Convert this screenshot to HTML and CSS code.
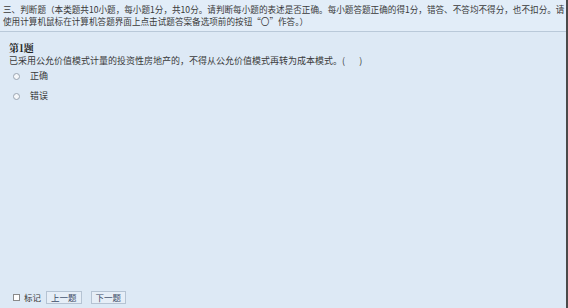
FILE: index.html
```html
<!DOCTYPE html>
<html lang="zh">
<head>
<meta charset="utf-8">
<link rel="stylesheet" href="styles.css">
</head>
<body>
<div class="frame">
  <div class="main">
    <div class="intro">
      <p>三、判断题（本类题共10小题，每小题1分，共10分。请判断每小题的表述是否正确。每小题答题正确的得1分，错答、不答均不得分，也不扣分。请使用计算机鼠标在计算机答题界面上点击试题答案备选项前的按钮“〇”作答。）</p>
    </div>
    <div class="question">
      <div class="qtitle">第1题</div>
      <div class="qtext">已采用公允价值模式计量的投资性房地产的，不得从公允价值模式再转为成本模式。(&nbsp;&nbsp;&nbsp;&nbsp;&nbsp;&nbsp;&nbsp;)</div>
      <div class="opt"><span class="radio"></span><span>正确</span></div>
      <div class="opt"><span class="radio"></span><span>错误</span></div>
    </div>
    <div class="footer">
      <span class="check"></span><span class="mark">标记</span>
      <span class="btn">上一题</span>
      <span class="btn">下一题</span>
    </div>
  </div>
  <div class="edge"></div>
</div>
</body>
</html>
```
FILE: styles.css
```css
html, body {
  margin: 0;
  padding: 0;
  background: #dde9f5;
}
body {
  font-family: "Noto Sans CJK SC", "Noto Sans", sans-serif;
  color: #3a3a3a;
  width: 568px;
  height: 308px;
  overflow: hidden;
}
.frame {
  display: flex;
  height: 308px;
}
.main {
  flex: 1;
  display: flex;
  flex-direction: column;
}
.edge {
  width: 2px;
  background: #4a4a4a;
}
.intro {
  background: #e2edf8;
  border-bottom: 1px solid #b9c9d9;
  padding: 3px 0 0 3px;
  box-sizing: border-box;
  height: 32px;
}
.intro p {
  margin: 0;
  font-size: 8.6px;
  line-height: 12px;
}
.question {
  flex: 1;
  padding: 9px 0 0 9px;
}
.qtitle {
  font-family: "Noto Serif CJK SC", "Liberation Serif", serif;
  font-weight: bold;
  font-size: 10px;
  line-height: 14px;
  color: #222;
}
.qtext {
  font-size: 9px;
  line-height: 11px;
}
.opt {
  display: flex;
  align-items: center;
  gap: 10px;
  font-size: 9px;
  line-height: 20px;
  padding-left: 4px;
}
.radio {
  width: 5px;
  height: 5px;
  border: 1px solid #9aa5b1;
  border-radius: 50%;
  background: #f4f7fa;
}
.footer {
  display: flex;
  align-items: center;
  box-sizing: border-box;
  height: 22px;
  padding: 0 0 0 13px;
  font-size: 8.5px;
}
.check {
  width: 5px;
  height: 5px;
  border: 1px solid #8a8a8a;
  background: #fff;
  margin-right: 4px;
}
.mark {
  margin-right: 5px;
}
.btn {
  border: 1px solid #b5c3d3;
  background: #e6eef7;
  padding: 0 4px;
  font-size: 8.5px;
  line-height: 11px;
  margin-right: 9px;
  color: #3a4a66;
}
```
